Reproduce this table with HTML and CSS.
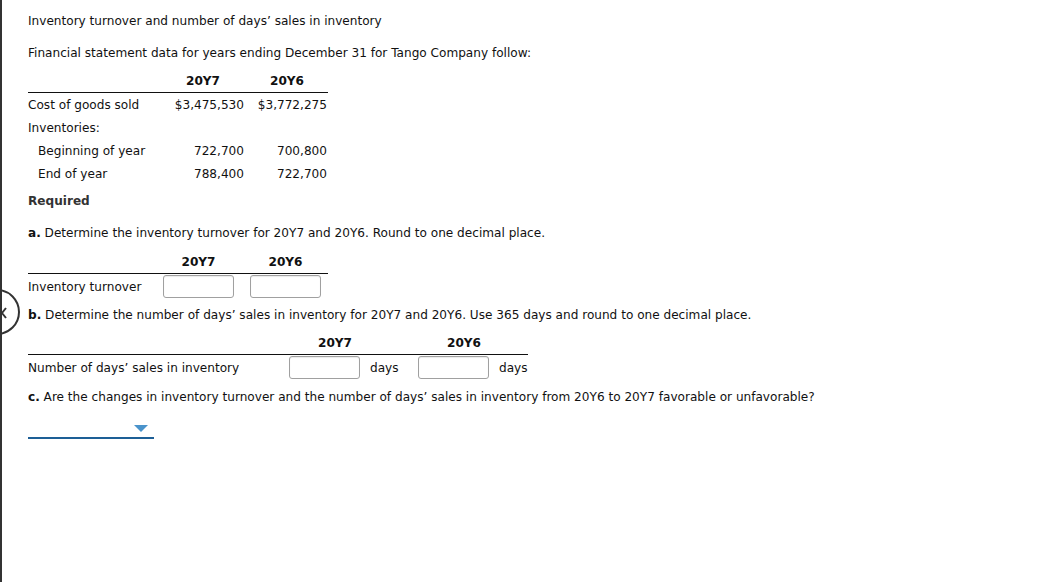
FILE: index.html
```html
<!DOCTYPE html>
<html>
<head>
<meta charset="utf-8">
<link rel="stylesheet" href="styles.css">
</head>
<body>
<div class="page">
  <div class="nav-btn">
    <svg width="10" height="14" viewBox="0 0 10 14"><path d="M4 2 L0 7 L4 12" fill="none" stroke="#333" stroke-width="2"/></svg>
  </div>
  <p class="title">Inventory turnover and number of days’ sales in inventory</p>
  <p class="intro">Financial statement data for years ending December 31 for Tango Company follow:</p>
  <table class="data">
    <tr class="head"><th class="c1"></th><th class="c2">20Y7</th><th class="c3">20Y6</th></tr>
    <tr><td>Cost of goods sold</td><td class="num n2">$3,475,530</td><td class="num n3">$3,772,275</td></tr>
    <tr><td>Inventories:</td><td></td><td></td></tr>
    <tr><td class="ind">Beginning of year</td><td class="num n2">722,700</td><td class="num n3">700,800</td></tr>
    <tr><td class="ind">End of year</td><td class="num n2">788,400</td><td class="num n3">722,700</td></tr>
  </table>
  <p class="req">Required</p>
  <p class="q qa"><b>a.</b> Determine the inventory turnover for 20Y7 and 20Y6. Round to one decimal place.</p>
  <table class="ans a">
    <tr class="head"><th class="a1"></th><th class="a2">20Y7</th><th class="a3">20Y6</th></tr>
    <tr><td>Inventory turnover</td><td class="a2"><span class="box"></span></td><td class="a3"><span class="box"></span></td></tr>
  </table>
  <p class="q qb"><b>b.</b> Determine the number of days’ sales in inventory for 20Y7 and 20Y6. Use 365 days and round to one decimal place.</p>
  <table class="ans b">
    <tr class="head"><th class="b1"></th><th class="bh1" colspan="2">20Y7</th><th class="bh2" colspan="2">20Y6</th></tr>
    <tr><td>Number of days’ sales in inventory</td><td class="b2"><span class="box"></span></td><td class="b3">days</td><td class="b4"><span class="box"></span></td><td class="b5">days</td></tr>
  </table>
  <p class="q qc"><b>c.</b> Are the changes in inventory turnover and the number of days’ sales in inventory from 20Y6 to 20Y7 favorable or unfavorable?</p>
  <div class="select"><span class="tri"></span></div>
</div>
</body>
</html>
```
FILE: styles.css
```css
html, body { margin: 0; padding: 0; background: #fff; }
body { font-family: "DejaVu Sans", Verdana, sans-serif; font-size: 12.1px; color: #111; }
.page { position: relative; border-left: 2px solid #333; min-height: 582px; box-sizing: border-box; padding: 13px 0 0 26px; overflow: hidden; }
p { margin: 0; line-height: 16px; }
.intro { margin-top: 16px; }
table { border-collapse: collapse; }
td, th { padding: 0; height: 23px; line-height: 16px; white-space: nowrap; }
th { font-weight: bold; text-align: center; }
.head th { border-bottom: 1px solid #111; }
.data { margin-top: 8px; }
.c1 { width: 132px; }
.c2 { width: 86px; }
.c3 { width: 82px; }
.num { text-align: right; }
.n2 { padding-right: 2px; }
.n3 { padding-right: 1px; }
.ind { padding-left: 10px; }
.req { margin-top: 8px; font-weight: bold; color: #333; }
.qa { margin-top: 16px; }
.ans { margin-top: 10px; }
.ans .head th { height: 22px; }
.ans td { height: 25px; }
.box { display: block; width: 71px; height: 23px; box-sizing: border-box; border: 1px solid #a0a0a0; border-radius: 3px; background: #fff; box-shadow: inset 0 1px 1px rgba(0,0,0,0.08); }
.a1 { width: 129px; }
.a2 { width: 71px; padding: 0 7px 0 6px; }
.a3 { width: 71px; padding: 0 7px 0 9px; }
.qb { margin-top: 8px; }
.b.ans { margin-top: 9px; }
.b1 { width: 255px; }
.bh1 { padding-right: 21px; }
.bh2 { padding-right: 8px; }
.b2 { padding: 0 6px 0 6px; width: 71px; }
.b3 { padding-left: 4px; width: 38px; }
.b4 { padding: 0 6px 0 10px; width: 71px; }
.b5 { padding-left: 4px; width: 29px; }
.qc { margin-top: 9px; }
.select { margin-top: 13px; width: 120px; height: 19px; border-bottom: 2px solid #1d5f96; display: flex; justify-content: flex-end; align-items: center; padding-right: 6px; }
.tri { width: 0; height: 0; border-left: 7px solid transparent; border-right: 7px solid transparent; border-top: 7px solid #4a93cb; margin-top: 2px; }
.nav-btn { position: absolute; left: -28px; top: 289px; width: 42px; height: 42px; border: 2px solid #333; border-radius: 50%; background: #fff; }
.nav-btn svg { position: absolute; left: 26px; top: 15px; }
```
